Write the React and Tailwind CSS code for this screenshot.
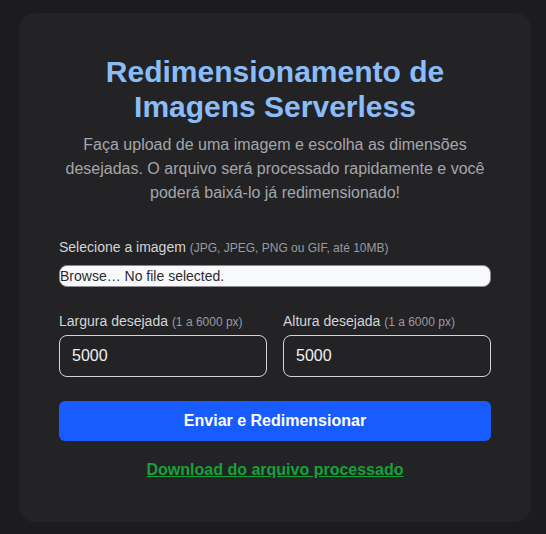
export default function App() {
  return (
    <div className="min-h-screen bg-[#1c1c1e] pt-[13px] pb-[14px]" style={{ fontFamily: '"Liberation Sans", Arial, sans-serif' }}>
      <div className="ml-[19px] w-[512px] rounded-2xl bg-[#232325] px-10 pt-[41px] pb-[40px]">
        <h1 className="text-center text-[30px] font-bold leading-[35px] text-[#8bbcfa]">
          Redimensionamento de
          <br />
          Imagens Serverless
        </h1>
        <p className="mt-[9px] text-center text-base leading-6 text-[#a4a6ab]">
          Faça upload de uma imagem e escolha as dimensões desejadas. O arquivo será processado rapidamente e você poderá baixá-lo já redimensionado!
        </p>

        <form className="mt-[32px]" onSubmit={(e) => e.preventDefault()}>
          <label className="block text-sm leading-5 text-[#d4d4d8]">
            Selecione a imagem <span className="text-xs text-[#9a9aa0]">(JPG, JPEG, PNG ou GIF, até 10MB)</span>
          </label>
          <div className="mt-[8px] flex h-[22px] items-center rounded-lg border border-[#8a8a90] bg-[#f8f9fb] text-sm text-[#2a2a2e]">
            Browse… No file selected.
          </div>

          <div className="mt-[24px] grid grid-cols-2 gap-4">
            <div>
              <label className="block text-sm leading-5 text-[#d4d4d8]">
                Largura desejada <span className="text-xs text-[#9a9aa0]">(1 a 6000 px)</span>
              </label>
              <input
                type="text"
                defaultValue="5000"
                className="mt-[4px] h-[42px] w-full rounded-lg border border-[#d4d4d8] bg-transparent px-3 text-base text-[#f0f0f2] outline-none"
              />
            </div>
            <div>
              <label className="block text-sm leading-5 text-[#d4d4d8]">
                Altura desejada <span className="text-xs text-[#9a9aa0]">(1 a 6000 px)</span>
              </label>
              <input
                type="text"
                defaultValue="5000"
                className="mt-[4px] h-[42px] w-full rounded-lg border border-[#d4d4d8] bg-transparent px-3 text-base text-[#f0f0f2] outline-none"
              />
            </div>
          </div>

          <button type="submit" className="mt-6 h-10 w-full rounded-md bg-[#185cff] text-base font-bold text-white">
            Enviar e Redimensionar
          </button>
        </form>

        <div className="mt-[17px] text-center">
          <a href="#" className="text-base font-bold text-[#16a13a] underline">
            Download do arquivo processado
          </a>
        </div>
      </div>
    </div>
  )
}
